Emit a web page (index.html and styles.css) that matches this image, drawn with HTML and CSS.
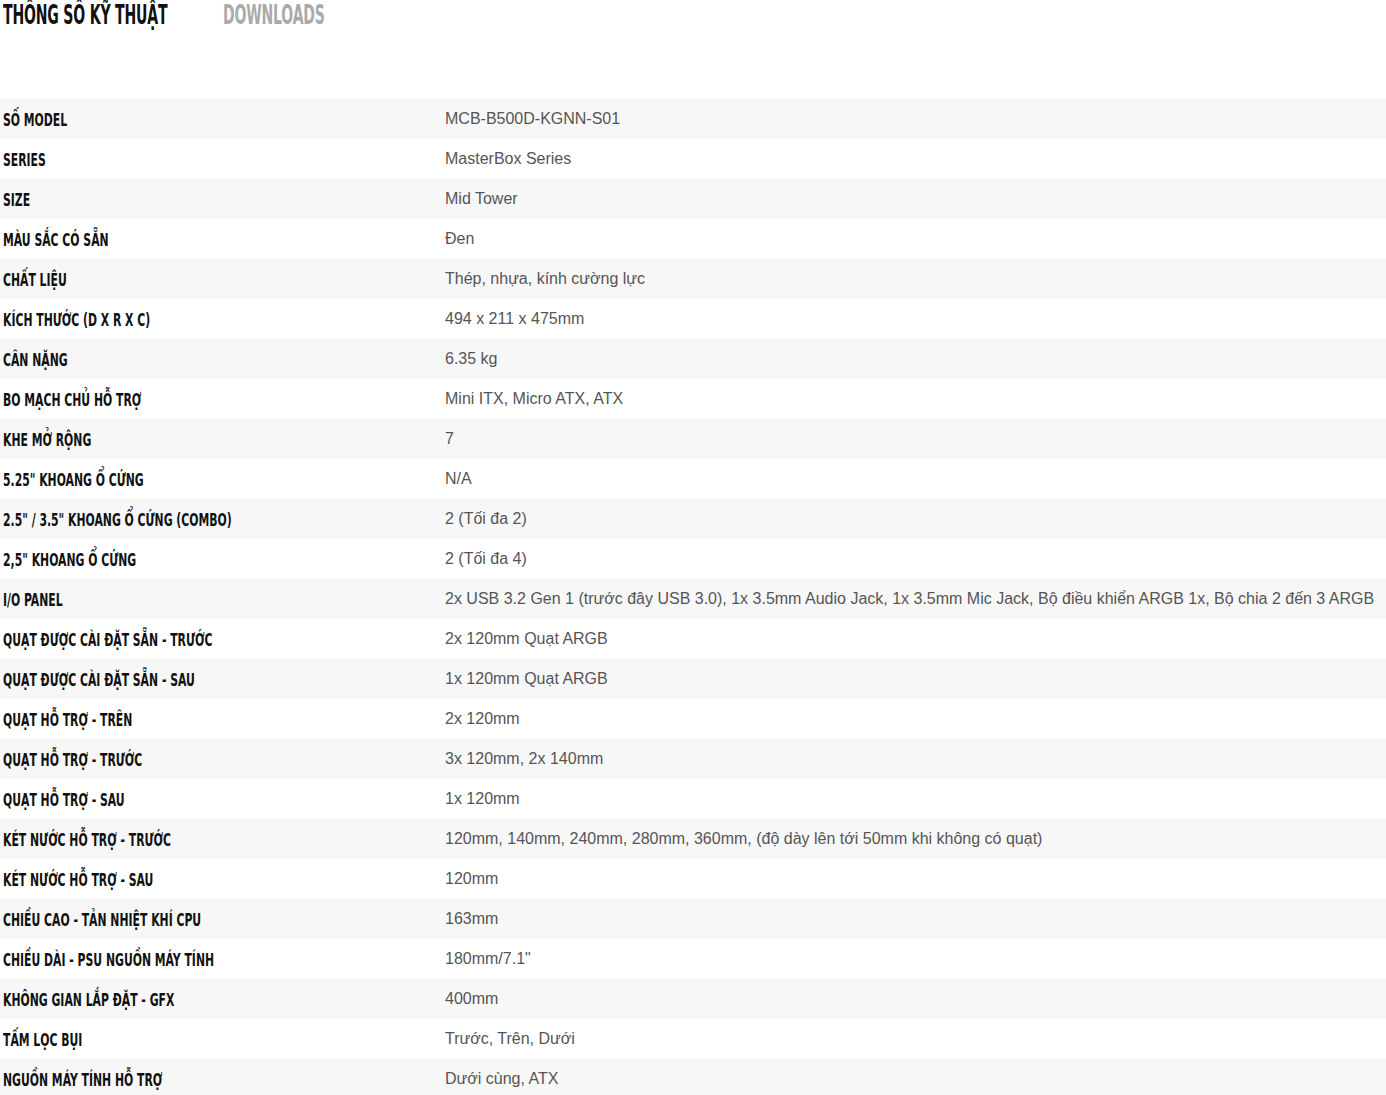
FILE: index.html
```html
<!DOCTYPE html>
<html lang="vi">
<head>
    <meta charset="UTF-8">
    <meta name="viewport" content="width=device-width, initial-scale=1.0">
    <title>Thông số kỹ thuật</title>
    <link rel="stylesheet" href="styles.css">
</head>
<body>
    <div class="tabs">
        <a href="#" class="tab tab-active">Thông số kỹ thuật</a>
        <a href="#" class="tab">Downloads</a>
    </div>

    <table class="specs">
        <tr><th><span>Số model</span></th><td>MCB-B500D-KGNN-S01</td></tr>
        <tr><th><span>Series</span></th><td>MasterBox Series</td></tr>
        <tr><th><span>Size</span></th><td>Mid Tower</td></tr>
        <tr><th><span>Màu sắc có sẵn</span></th><td>Đen</td></tr>
        <tr><th><span>Chất liệu</span></th><td>Thép, nhựa, kính cường lực</td></tr>
        <tr><th><span>Kích thước (D x R x C)</span></th><td>494 x 211 x 475mm</td></tr>
        <tr><th><span>Cân nặng</span></th><td>6.35 kg</td></tr>
        <tr><th><span>Bo mạch chủ hỗ trợ</span></th><td>Mini ITX, Micro ATX, ATX</td></tr>
        <tr><th><span>Khe mở rộng</span></th><td>7</td></tr>
        <tr><th><span>5.25" khoang ổ cứng</span></th><td>N/A</td></tr>
        <tr><th><span>2.5" / 3.5" khoang ổ cứng (combo)</span></th><td>2 (Tối đa 2)</td></tr>
        <tr><th><span>2,5" khoang ổ cứng</span></th><td>2 (Tối đa 4)</td></tr>
        <tr><th><span>I/O Panel</span></th><td>2x USB 3.2 Gen 1 (trước đây USB 3.0), 1x 3.5mm Audio Jack, 1x 3.5mm Mic Jack, Bộ điều khiển ARGB 1x, Bộ chia 2 đến 3 ARGB</td></tr>
        <tr><th><span>Quạt được cài đặt sẵn - Trước</span></th><td>2x 120mm Quạt ARGB</td></tr>
        <tr><th><span>Quạt được cài đặt sẵn - Sau</span></th><td>1x 120mm Quạt ARGB</td></tr>
        <tr><th><span>Quạt hỗ trợ - Trên</span></th><td>2x 120mm</td></tr>
        <tr><th><span>Quạt hỗ trợ - Trước</span></th><td>3x 120mm, 2x 140mm</td></tr>
        <tr><th><span>Quạt hỗ trợ - Sau</span></th><td>1x 120mm</td></tr>
        <tr><th><span>Két nước hỗ trợ - Trước</span></th><td>120mm, 140mm, 240mm, 280mm, 360mm, (độ dày lên tới 50mm khi không có quạt)</td></tr>
        <tr><th><span>Két nước hỗ trợ - Sau</span></th><td>120mm</td></tr>
        <tr><th><span>Chiều cao - Tản nhiệt khí CPU</span></th><td>163mm</td></tr>
        <tr><th><span>Chiều dài - PSU nguồn máy tính</span></th><td>180mm/7.1"</td></tr>
        <tr><th><span>Không gian lắp đặt - GFX</span></th><td>400mm</td></tr>
        <tr><th><span>Tấm lọc bụi</span></th><td>Trước, Trên, Dưới</td></tr>
        <tr><th><span>Nguồn máy tính hỗ trợ</span></th><td>Dưới cùng, ATX</td></tr>
    </table>
</body>
</html>
```

FILE: styles.css
```css
* {
    margin: 0;
    padding: 0;
    box-sizing: border-box;
}

body {
    font-family: "Liberation Sans", Arial, sans-serif;
    background: white;
    color: #555;
}

.tabs {
    display: flex;
    height: 99px;
    padding: 1px 3px 0;
}

.tab {
    display: inline-block;
    font-family: "DejaVu Sans Condensed", "DejaVu Sans", sans-serif;
    font-weight: bold;
    font-size: 26px;
    line-height: 28px;
    text-transform: uppercase;
    text-decoration: none;
    color: #aaa;
    letter-spacing: -0.3px;
    transform: scaleX(0.6);
    transform-origin: left center;
}

.tab-active {
    color: #111;
    margin-right: -54px;
}

.specs {
    width: 100%;
    border-collapse: collapse;
}

.specs tr {
    height: 40px;
}

.specs tr:nth-child(odd) {
    background: #f7f7f7;
}

.specs th {
    width: 442px;
    padding: 0 3px;
    text-align: left;
    font-family: "DejaVu Sans Condensed", "DejaVu Sans", sans-serif;
    font-weight: bold;
    font-size: 18px;
    text-transform: uppercase;
    color: #111;
    vertical-align: middle;
    white-space: nowrap;
}

.specs th span {
    display: inline-block;
    transform: scaleX(0.67);
    transform-origin: left center;
}

.specs td {
    padding: 0 3px;
    font-size: 16px;
    color: #555;
    vertical-align: middle;
}
```
